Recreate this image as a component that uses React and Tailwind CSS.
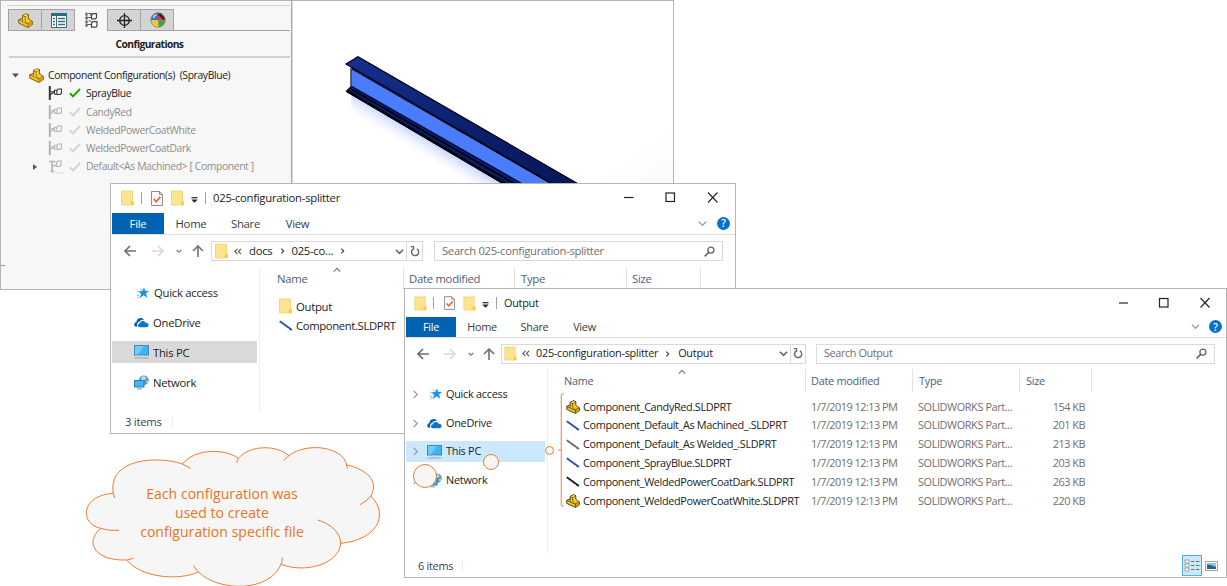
import React from 'react';

const files = [
  { icon: 'part', name: 'Component_CandyRed.SLDPRT', size: '154 KB' },
  { icon: '#2b46a8', name: 'Component_Default_As Machined_.SLDPRT', size: '201 KB' },
  { icon: '#666666', name: 'Component_Default_As Welded_.SLDPRT', size: '213 KB' },
  { icon: '#2b46a8', name: 'Component_SprayBlue.SLDPRT', size: '203 KB' },
  { icon: '#111111', name: 'Component_WeldedPowerCoatDark.SLDPRT', size: '263 KB' },
  { icon: 'part', name: 'Component_WeldedPowerCoatWhite.SLDPRT', size: '220 KB' },
];

function PartIcon({ className = 'h-[15px] w-[15px]', line = '#8a6a14' }) {
  return (
    <svg viewBox="0 0 16 16" className={className}>
      <path d="M.8 7.200 4.800 5.500V2.600L8.600.7l2.600 1.200v4.200l1.600 1.300L15.300 9v3.200L10.800 15.400.8 10.600Z" fill="#f9cb2e" stroke={line} strokeWidth="1.100" strokeLinejoin="round" />
      <path d="M5 2.800 7.600 4l3.400-2M7.600 4v3.200c.3 2 1.600 3.200 3.200 4.100v3.900M10.800 11.300 15.100 9M1 7.400l9.500 4.500M4.800 5.500v3.500" fill="none" stroke={line} strokeWidth=".9" />
      <path d="M5.800 2.600 8.500 1.300l1.900.9-2.800 1.200Z" fill="#ffe88a" />
      <path d="M11.400 11.700 14.800 9.700v2.200L11.400 14.400Z" fill="#d89b16" />
    </svg>
  );
}

function FolderIcon({ className = 'h-[16px] w-[13px]' }) {
  return (
    <svg viewBox="0 0 13 16" className={className}>
      <path d="M.5 1h11v9.500l1 .8V15H.5Z" fill="#ffe48f" stroke="#f0cf68" strokeWidth=".8" />
      <path d="M9.800 11.300h2.700V15H9.800Z" fill="#f6cb4f" />
    </svg>
  );
}

function CheckDoc({ className = 'h-[15px] w-[12px]' }) {
  return (
    <svg viewBox="0 0 12 15" className={className}>
      <path d="M.5.5h8l3 3v11H.5Z" fill="#f9f9f9" stroke="#8b8b8b" />
      <path d="M8.500.5v3h3" fill="none" stroke="#8b8b8b" />
      <path d="m2.800 8 2.400 2.700 4.200-4.900" fill="none" stroke="#e8622c" strokeWidth="1.700" />
    </svg>
  );
}

function QuickMenu() {
  return (
    <svg viewBox="0 0 7 6" className="h-[6px] w-[7px]">
      <path d="M.5.7h6" stroke="#222" strokeWidth="1.200" />
      <path d="M.3 2.600h6.400L3.500 5.800Z" fill="#222" />
    </svg>
  );
}

function Chevron({ d, className, color = '#777', sw = 1.4 }) {
  return (
    <svg viewBox="0 0 10 10" className={className}>
      <path d={d} fill="none" stroke={color} strokeWidth={sw} />
    </svg>
  );
}
const DOWN = 'M1 3l4 4 4-4';
const UP = 'M1 7l4-4 4 4';
const RIGHT = 'M3 1l4 4-4 4';

function Arrow({ d, color }) {
  return (
    <svg viewBox="0 0 12 12" className="h-[12px] w-[12px]">
      <path d={d} fill="none" stroke={color} strokeWidth="1.600" />
    </svg>
  );
}

function WindowButtons() {
  return (
    <svg viewBox="0 0 94 12" className="h-[12px] w-[94px]">
      <path d="M0 5.500h9.500" stroke="#222" strokeWidth="1.200" />
      <rect x="42" y="1" width="8.500" height="8.500" fill="none" stroke="#222" strokeWidth="1.200" />
      <path d="M84 .5l9.500 10M93.500.5 84 10.500" stroke="#222" strokeWidth="1.100" />
    </svg>
  );
}

function Help() {
  return (
    <span className="flex h-[13px] w-[13px] items-center justify-center rounded-full bg-[#0a6fce] text-[10px] font-semibold leading-none text-white">?</span>
  );
}

function Refresh() {
  return (
    <svg viewBox="0 0 10 11" className="h-[11px] w-[10px]">
      <path d="M6.900 2.900A3.600 3.600 0 1 1 3 3.100" fill="none" stroke="#666" strokeWidth="1.400" />
      <path d="M3.800.7H.9M3.600.3v3.500" fill="none" stroke="#666" strokeWidth="1.300" />
    </svg>
  );
}

function SearchIcon() {
  return (
    <svg viewBox="0 0 11 11" className="h-[11px] w-[11px]">
      <circle cx="6.900" cy="4.100" r="3" fill="none" stroke="#666" strokeWidth="1.400" />
      <path d="M4.700 6.300.7 10.300" stroke="#666" strokeWidth="1.700" />
    </svg>
  );
}

function StarIcon() {
  return (
    <svg viewBox="0 0 14 13" className="h-[12px] w-[14px]">
      <path d="m8.200.5 1.200 3.600 4.400.1-3.500 2.500 1.300 4.900-3.900-2.600-4.500 3.100 1.800-4.900L1.700 5l4.300-.6Z" fill="#1c93e6" />
      <path d="M.3 9.400 3 8.600M.5 4.200l2.400 1M.6 11.800l2.200-1.300M4 2l2 1" stroke="#6cbcf2" strokeWidth="1" />
    </svg>
  );
}
function CloudIcon() {
  return (
    <svg viewBox="0 0 15 11" className="h-[11px] w-[15px]">
      <path d="M.4 8.800C-.3 6.300 1.300 5 2.500 5 2.300 2.200 5 .5 7.400 1c1.400.2 2.200 1 2.700 1.900C7.500 2.500 6 3.600 5.400 5 3.500 5.300 2.800 7 3.300 9.600 2 10 .8 9.700.4 8.800Z" fill="#0a64b8" />
      <path d="M5.600 10.200C3.400 9.900 3.500 6.400 6 6.200 6.400 3.600 10.600 3 11.600 5.800c2.400-.2 3.300 1.600 2.900 3-.3.900-1 1.400-1.900 1.400Z" fill="#0a74d2" />
    </svg>
  );
}
function PcIcon() {
  return (
    <svg viewBox="0 0 15 14" className="h-[14px] w-[15px]">
      <rect x=".5" y=".5" width="14" height="9.500" fill="#3db4f5" stroke="#3f88b5" />
      <path d="M1 1h9L4 9.500H1Z" fill="#6fcbfa" />
      <path d="M5 10.500h5v1H5Z" fill="#c4ccd2" />
      <path d="M.5 13h14" stroke="#8fa3b3" strokeWidth="1" />
    </svg>
  );
}
function NetworkIcon() {
  return (
    <svg viewBox="0 0 15 15" className="h-[15px] w-[15px]">
      <circle cx="9.800" cy="5.300" r="4.900" fill="#5a9dbd" />
      <path d="M7 2.300c2-2 5-.5 5.500.8L10 5.500 7.500 4.800ZM12 6l2.500 0-1.500 3Z" fill="#b6dce8" />
      <rect x=".5" y="5.500" width="9.500" height="6.500" fill="#3fb5f5" stroke="#2b7fae" />
      <path d="M3 13.800h5" stroke="#8fa3b3" strokeWidth="1.200" />
    </svg>
  );
}

function BeamIcon({ color }) {
  return (
    <svg viewBox="0 0 14 12" className="h-[12px] w-[14px]">
      <path d="M.8 1.200l12 8.800" stroke={color} strokeWidth="2" />
      <path d="M1.500 2.600l9.500 7" stroke="#ffffff" opacity=".45" strokeWidth="1" strokeDasharray="1.500 1.500" />
    </svg>
  );
}

function FeatureIcon({ color, last }) {
  return last ? (
    <svg viewBox="0 0 16 16" className="h-[16px] w-[16px]">
      <path d="M1 2.500h6.500M4 2.500v10M2.500 12.500h4M4 6.500h4.500" fill="none" stroke={color} strokeWidth="1.600" />
      <path d="M8.500 3.500l1.500-1.500h3v4l-1.500 1.500h-3ZM8.500 14h1.200M11.300 14h1.200M14 14h1.200" fill="none" stroke={color} strokeWidth="1.200" />
    </svg>
  ) : (
    <svg viewBox="0 0 16 16" className="h-[16px] w-[16px]">
      <path d="M1.800 1v14" stroke={color} strokeWidth="2" />
      <path d="M2 10.200 6.500 6.500M3 6.800h3.500" stroke={color} strokeWidth="1.100" />
      <path d="M6.500 5.300h2.400v4H6.500ZM8.900 5.300l1.200-1.300h3.300v4.200l-1.300 1.300h-3.200" fill="none" stroke={color} strokeWidth="1.100" />
    </svg>
  );
}

function Tick({ color }) {
  return (
    <svg viewBox="0 0 12 10" className="h-[10px] w-[12px]">
      <path d="M.9 5.300 4 8.400 11 1" fill="none" stroke={color} strokeWidth="2" />
    </svg>
  );
}

const TAB = 'flex w-[33px] items-center justify-center border-r border-[#a3a3a3] pl-px';

function ConfigRow({ label, active, last }) {
  return (
    <div className={`flex h-[18.3px] items-center ${active ? 'text-[#1a1a1a]' : 'text-[#8d8d8d]'}`}>
      <span className="flex w-[47px] justify-end pr-[11px]">
        {last && <svg viewBox="0 0 4 6" className="h-[6px] w-[4px]"><path d="M0 0l4 3-4 3Z" fill="#555" /></svg>}
      </span>
      <FeatureIcon color={active ? '#333' : '#b4b4b4'} last={last} />
      <span className="ml-[5px] mr-[5px] flex"><Tick color={active ? '#27a300' : '#d3d3d3'} /></span>
      <span>{label}</span>
    </div>
  );
}

function ModelWindow() {
  return (
    <div className="absolute left-0 top-0 flex h-[290px] w-[674px] border border-[#b5b5b5] bg-white">
      <div className="relative flex w-[290px] flex-col bg-[#f7f7f7] text-[10.3px] leading-none tracking-[-0.35px]">
        <div className="ml-[6px] mr-px mt-[4px] border-t border-[#d0d0d0]" />
        <div className="ml-[7px] mr-px mt-[3px] flex h-[22px] border-b border-[#a3a3a3]">
          <div className="flex w-[34px] items-center justify-center border border-b-0 border-[#a3a3a3] bg-[#d4d4d4]"><PartIcon /></div>
          <div className={`${TAB} border-t bg-[#d4d4d4]`}>
            <svg viewBox="0 0 16 15" className="h-[15px] w-[16px]">
              <rect x=".5" y=".5" width="15" height="14" fill="#fff" stroke="#3f687e" />
              <path d="M0 1.500h16" stroke="#2d6a88" strokeWidth="3" />
              <path d="M5.500 3v11" stroke="#3f687e" />
              <path d="M2 5.500h2M2 8.500h2M2 11.500h2M7 5.500h7M7 8.500h7M7 11.500h7" stroke="#3c6b82" strokeWidth="1.300" />
            </svg>
          </div>
          <div className={`${TAB} -mb-px bg-[#f7f7f7]`}>
            <svg viewBox="0 0 13 16" className="h-[16px] w-[13px]">
              <path d="M1.500.8v14" stroke="#555" strokeWidth="2" strokeDasharray="3 .8" />
              <path d="M2 5.500h4.500M2 12.500h4.500M3.500 1.500h2.500v2.500M3.500 9h3" fill="none" stroke="#555" strokeWidth="1.200" />
              <path d="M6.500 3l1.500-1.300h3.500v3.800l-1 1.300H6.500ZM6.500 11l1.500-1.300h4v4.200l-1 1.300H6.500Z" fill="#fff" stroke="#444" strokeWidth="1.200" />
            </svg>
          </div>
          <div className={`${TAB} border-t bg-[#d4d4d4]`}>
            <svg viewBox="0 0 15 15" className="h-[15px] w-[15px]">
              <circle cx="7.500" cy="7.500" r="4.800" fill="none" stroke="#222" strokeWidth="1.300" />
              <path d="M7.500 0v15M0 7.500h15" stroke="#222" strokeWidth="1.300" />
            </svg>
          </div>
          <div className={`${TAB} border-t bg-[#d4d4d4]`}>
            <svg viewBox="0 0 16 16" className="h-[16px] w-[16px]">
              <path d="M8 8.500V.8A7.300 7.300 0 0 0 .7 8Z" fill="#2f74cf" />
              <path d="M.7 8 8 8.500 9.500 15.200A7.300 7.300 0 0 1 .7 8Z" fill="#f5c92c" />
              <path d="M8 8.500 15.300 8A7.300 7.300 0 0 1 8.800 15.200Z" fill="#3ba648" />
              <path d="M8 8.500V.8A7.300 7.300 0 0 1 15.300 8Z" fill="#dd3f33" />
              <path d="M7.500 2l3-.8 4.600 5.300-1.600 1.500Z" fill="#2a2422" />
              <circle cx="8" cy="8" r="7.300" fill="none" stroke="#777" strokeWidth=".7" />
              <path d="M3.500 6a4 4 0 0 1 3-3.200" stroke="#fff" strokeWidth="1.600" fill="none" opacity=".7" />
            </svg>
          </div>
        </div>
        <div className="ml-[8px] mr-px flex h-[27px] items-center justify-center border-b-2 border-[#d0d0d0] pt-[2px] font-bold tracking-[-0.6px] text-[#1f1f1f]">Configurations</div>
        <div className="mt-[8px] flex h-[18.3px] items-center text-[#1a1a1a]">
          <svg viewBox="0 0 7 5" className="ml-[11px] mr-[10px] h-[5px] w-[7px]"><path d="M0 .5h7L3.500 4.500Z" fill="#555" /></svg>
          <PartIcon />
          <span className="ml-[4px] whitespace-pre">Component Configuration(s)  (SprayBlue)</span>
        </div>
        <ConfigRow label="SprayBlue" active />
        <ConfigRow label="CandyRed" />
        <ConfigRow label="WeldedPowerCoatWhite" />
        <ConfigRow label="WeldedPowerCoatDark" />
        <ConfigRow label="Default<As Machined> [ Component ]" last />
        <div className="mt-auto mb-[23px] w-[4px] border-t border-[#999]" />
      </div>
      <div className="w-[2px] border-l border-[#a8a8a8] bg-[#d8d8d8]" />
      <div className="flex-1 bg-gradient-to-br from-white from-70% to-[#eef1f4]">
        <svg viewBox="9 3 1140 549" className="h-[183px] w-[380px]">
          <defs>
            <linearGradient id="refl" gradientUnits="userSpaceOnUse" x1="320" y1="365" x2="290" y2="415">
              <stop offset="0" stopColor="#cddaff" />
              <stop offset="1" stopColor="#fff" stopOpacity="0" />
            </linearGradient>
            <linearGradient id="flange" x1="0" y1="0" x2="1" y2="1">
              <stop offset="0" stopColor="#17308f" />
              <stop offset=".6" stopColor="#0b1e6a" />
              <stop offset="1" stopColor="#08175a" />
            </linearGradient>
          </defs>
          <path d="M184 280V338L550 552H650Z" fill="url(#refl)" />
          <path d="M184 200 800 555H693L184 262Z" fill="#4a7cff" />
          <path d="M184 258 168 274 645 555H704Z" fill="#0a1c68" stroke="#000014" strokeWidth="3" />
          <path d="M180 265 680 555" stroke="#000" strokeWidth="4" />
          <path d="M172 274 648 553" stroke="#000" strokeWidth="7" />
          <path d="M168 192 204 170 872 556H793Z" fill="url(#flange)" stroke="#000014" strokeWidth="3.500" />
          <path d="M186 206 790 553" stroke="#05070f" strokeWidth="6" strokeDasharray="5 1" />
          <path d="M183 203V258" stroke="#222" strokeWidth="4" />
        </svg>
      </div>
    </div>
  );
}

function Sep({ className }) {
  return <span className={`h-[12px] w-px bg-[#a0a0a0] ${className}`} />;
}

function SourceWindow() {
  const nav = 'flex h-[29.8px] items-center';
  return (
    <div className="absolute left-[110px] top-[183px] flex h-[251px] w-[626px] flex-col border border-[#b5b5b5] bg-white text-[11.3px] leading-none tracking-[-0.27px] text-[#1c1c1c]">
      <div className="flex h-[29px] shrink-0 items-center pb-px pl-[10px] pr-[17px]">
        <FolderIcon />
        <Sep className="ml-[7px]" />
        <span className="ml-[9px]"><CheckDoc /></span>
        <span className="ml-[8px]"><FolderIcon /></span>
        <span className="ml-[7px] mt-[4px]"><QuickMenu /></span>
        <Sep className="ml-[7px]" />
        <span className="ml-[7px]">025-configuration-splitter</span>
        <span className="ml-auto"><WindowButtons /></span>
      </div>
      <div className="flex h-[22px] shrink-0 items-stretch border-b border-[#e0e0e0] pl-px pr-[5px] text-[#3a3a3a]">
        <span className="flex w-[52px] items-center justify-center bg-[#0063b1] text-white">File</span>
        <span className="flex w-[54px] items-center justify-center">Home</span>
        <span className="flex w-[55px] items-center justify-center">Share</span>
        <span className="flex w-[49px] items-center justify-center">View</span>
        <span className="ml-auto flex items-center gap-[10px] pb-px">
          <Chevron d={DOWN} className="h-[9px] w-[9px]" color="#a0a0a0" />
          <Help />
        </span>
      </div>
      <div className="flex h-[33px] shrink-0 items-center pb-px pl-[13px] pr-[12px]">
        <Arrow d="M6 1 1 6l5 5M1 6h11" color="#707070" />
        <span className="ml-[16px]"><Arrow d="M6 1l5 5-5 5M11 6H0" color="#d8d8d8" /></span>
        <Chevron d={DOWN} className="ml-[12px] h-[6px] w-[6px]" sw={2} />
        <span className="ml-[10px]"><Arrow d="M1 6l5-5 5 5M6 1v11" color="#707070" /></span>
        <div className="ml-[7px] flex h-[20px] w-[212px] items-center border border-[#dadada] pl-[3px]">
          <FolderIcon />
          <Chevron d="M5 2 2 5l3 3M9 2 6 5l3 3" className="ml-[5px] h-[9px] w-[9px]" color="#555" sw={1.2} />
          <span className="ml-[7px]">docs</span>
          <Chevron d={RIGHT} className="ml-[7px] mr-[5px] h-[6px] w-[7px]" color="#444" sw={2} />
          <span>025-co...</span>
          <Chevron d={RIGHT} className="ml-[6px] h-[6px] w-[7px]" color="#444" sw={2} />
          <Chevron d={DOWN} className="ml-auto mr-[2px] h-[9px] w-[9px]" color="#666" sw={1.8} />
          <span className="flex h-full w-[16px] items-center justify-center border-l border-[#dadada]"><Refresh /></span>
        </div>
        <div className="ml-[11px] flex h-[20px] flex-1 items-center justify-between border border-[#dadada] pl-[7px] pr-[7px] tracking-[-0.33px] text-[#6f6f6f]">
          <span>Search 025-configuration-splitter</span>
          <SearchIcon />
        </div>
      </div>
      <div className="flex min-h-0 flex-1">
        <div className="flex w-[149px] flex-col border-r border-[#efefef] pt-[10px]">
          <div className={nav}><span className="ml-[25px] mr-[4px]"><StarIcon /></span>Quick access</div>
          <div className={nav}><span className="ml-[23px] mr-[4px]"><CloudIcon /></span>OneDrive</div>
          <div className={nav}><div className="ml-px flex h-[22px] w-[145px] items-center bg-[#d9d9d9]"><span className="ml-[22px] mr-[4px]"><PcIcon /></span>This PC</div></div>
          <div className={nav}><span className="ml-[23px] mr-[4px]"><NetworkIcon /></span>Network</div>
        </div>
        <div className="relative flex flex-1 flex-col">
          <Chevron d={UP} className="absolute left-[73px] top-[-2px] h-[8px] w-[8px]" />
          <div className="flex h-[22px] items-center text-[#4c607a]">
            <span className="w-[143px] pl-[17px]">Name</span>
            <span className="flex h-full w-[111px] items-center border-l border-[#e2e2e2] pl-[5px]">Date modified</span>
            <span className="flex h-full w-[112px] items-center border-l border-[#e2e2e2] pl-[6px]">Type</span>
            <span className="flex h-full w-[75px] items-center border-x border-[#e2e2e2] pl-[5px]">Size</span>
          </div>
          <div className="mt-[6.6px] flex h-[19.3px] items-center pl-[19px]"><FolderIcon /><span className="ml-[4px]">Output</span></div>
          <div className="flex h-[19.3px] items-center pl-[19px] tracking-[-0.37px]"><BeamIcon color="#2b46a8" /><span className="ml-[3px]">Component.SLDPRT</span></div>
        </div>
      </div>
      <div className="flex h-[22px] items-center pl-[14px] text-[#31425c]">3 items<span className="ml-[10px] h-[12px] w-px bg-[#eee]" /></div>
    </div>
  );
}

function OutputWindow() {
  const nav = 'flex h-[28.6px] items-center';
  const arrow = <Chevron d={RIGHT} className="h-[9px] w-[9px]" color="#999" />;
  const sm = 'h-[15px] w-[13px]';
  return (
    <div className="absolute left-[404px] top-[288px] flex h-[290px] w-[823px] flex-col border border-[#b5b5b5] bg-white text-[10.9px] leading-none tracking-[-0.27px] text-[#1c1c1c]">
      <div className="flex h-[28px] shrink-0 items-center pl-[9px] pr-[15px]">
        <FolderIcon className={sm} />
        <Sep className="ml-[6px]" />
        <span className="ml-[10px]"><CheckDoc className="h-[14px] w-[11px]" /></span>
        <span className="ml-[8px]"><FolderIcon className={sm} /></span>
        <span className="ml-[6px] mt-[3px]"><QuickMenu /></span>
        <Sep className="ml-[7px]" />
        <span className="ml-[7px]">Output</span>
        <span className="ml-auto"><svg viewBox="0 0 92 12" className="h-[12px] w-[92px]">
          <path d="M0 6h9" stroke="#222" strokeWidth="1.200" />
          <rect x="40.500" y="1.500" width="8.500" height="8.500" fill="none" stroke="#222" strokeWidth="1.200" />
          <path d="M81.500 1l9 9.500M90.500 1l-9 9.500" stroke="#222" strokeWidth="1.100" />
        </svg></span>
      </div>
      <div className="flex h-[21px] shrink-0 items-stretch border-b border-[#e0e0e0] pl-px pr-[4px] text-[#3a3a3a]">
        <span className="flex w-[50px] items-center justify-center bg-[#0063b1] text-white">File</span>
        <span className="flex w-[52px] items-center justify-center">Home</span>
        <span className="flex w-[53px] items-center justify-center">Share</span>
        <span className="flex w-[47px] items-center justify-center">View</span>
        <span className="ml-auto flex items-center gap-[9px] pb-px">
          <Chevron d={DOWN} className="h-[9px] w-[9px]" color="#a0a0a0" />
          <Help />
        </span>
      </div>
      <div className="flex h-[31px] shrink-0 items-center pl-[12px] pr-[11px]">
        <Arrow d="M6 1 1 6l5 5M1 6h11" color="#707070" />
        <span className="ml-[15px]"><Arrow d="M6 1l5 5-5 5M11 6H0" color="#d8d8d8" /></span>
        <Chevron d={DOWN} className="ml-[12px] h-[6px] w-[6px]" sw={2} />
        <span className="ml-[9px]"><Arrow d="M1 6l5-5 5 5M6 1v11" color="#707070" /></span>
        <div className="ml-[6px] flex h-[20px] w-[305px] items-center border border-[#dadada] pl-[2px]">
          <FolderIcon className={sm} />
          <Chevron d="M5 2 2 5l3 3M9 2 6 5l3 3" className="ml-[4px] h-[9px] w-[9px]" color="#555" sw={1.2} />
          <span className="ml-[6px]">025-configuration-splitter</span>
          <Chevron d={RIGHT} className="ml-[6px] mr-[7px] h-[6px] w-[7px]" color="#444" sw={2} />
          <span>Output</span>
          <Chevron d={DOWN} className="ml-auto mr-[2px] h-[9px] w-[9px]" color="#666" sw={1.8} />
          <span className="flex h-full w-[15px] items-center justify-center border-l border-[#dadada]"><Refresh /></span>
        </div>
        <div className="ml-[10px] flex h-[20px] flex-1 items-center justify-between border border-[#dadada] pl-[7px] pr-[7px] tracking-[-0.4px] text-[#6f6f6f]">
          <span>Search Output</span>
          <SearchIcon />
        </div>
      </div>
      <div className="flex min-h-0 flex-1">
        <div className="flex w-[143px] flex-col border-r border-[#efefef] pt-[11.2px]">
          <div className={nav}><span className="ml-[6px] mr-[9px]">{arrow}</span><StarIcon /><span className="ml-[3px]">Quick access</span></div>
          <div className={nav}><span className="ml-[6px] mr-[7px]">{arrow}</span><CloudIcon /><span className="ml-[4px]">OneDrive</span></div>
          <div className={nav}><div className="ml-px flex h-[21px] w-[139px] items-center bg-[#cce8ff]"><span className="ml-[5px] mr-[7px]">{arrow}</span><PcIcon /><span className="ml-[4px]">This PC</span></div></div>
          <div className={nav}><span className="ml-[6px] mr-[7px]">{arrow}</span><NetworkIcon /><span className="ml-[4px]">Network</span></div>
        </div>
        <div className="relative flex flex-1 flex-col">
          <Chevron d={UP} className="absolute left-[130px] top-[-1px] h-[8px] w-[8px]" />
          <div className="flex h-[23px] items-center text-[#4c607a]">
            <span className="w-[257px] pl-[16px] pt-px">Name</span>
            <span className="flex h-full w-[107px] items-center border-l border-[#e2e2e2] pl-[5px] pt-px">Date modified</span>
            <span className="flex h-full w-[107px] items-center border-l border-[#e2e2e2] pl-[6px] pt-px">Type</span>
            <span className="flex h-full w-[73px] items-center border-x border-[#e2e2e2] pl-[6px] pt-px">Size</span>
          </div>
          <div className="mt-[5.6px] flex flex-col text-[#6f6f6f]">
            {files.map((f) => (
              <div key={f.name} className="flex h-[18.8px] items-center pl-[18px]">
                <span className="w-[17px]">{f.icon === 'part' ? <PartIcon className="h-[14px] w-[14px]" line="#4d3c0d" /> : <BeamIcon color={f.icon} />}</span>
                <span className="w-[228px] whitespace-nowrap tracking-[-0.37px] text-[#1c1c1c]">{f.name}</span>
                <span className="w-[107px] whitespace-nowrap tracking-[-0.52px]">1/7/2019 12:13 PM</span>
                <span className="w-[107px] whitespace-nowrap tracking-[-0.4px]">SOLIDWORKS Part...</span>
                <span className="w-[60px] text-right tracking-[-0.5px]">{f.size}</span>
              </div>
            ))}
          </div>
        </div>
      </div>
      <div className="flex h-[23px] shrink-0 items-center pl-[13px] pr-[8px] text-[#31425c]">
        <span className="pt-[2px]">6 items</span><span className="ml-[9px] h-[11px] w-px bg-[#eee]" />
        <span className="ml-auto flex h-[21px] w-[20px] items-center justify-center border border-[#4fb2e3] bg-[#cbe8f6]">
          <svg viewBox="0 0 16 13" className="h-[13px] w-[16px]">
            <path d="M1 1h4v3H1ZM1 5h4v3H1ZM1 9h4v3H1Z" fill="#fff" stroke="#a09c9c" />
            <path d="M7 2.500h3.500M12 2.500h3.500M7 6.500h3.500M12 6.500h3.500M7 10.500h3.500M12 10.500h3.500" stroke="#66757e" />
          </svg>
        </span>
        <svg viewBox="0 0 13 10" className="ml-[3px] h-[10px] w-[13px]">
          <rect x=".5" y=".5" width="12" height="9" fill="#fff" stroke="#a5a5a5" />
          <path d="M2 2h9v3H2Z" fill="#8fc3f5" />
          <path d="M2 3.500c3 0 5 1.500 9 2V8H2Z" fill="#2b6280" />
        </svg>
      </div>
    </div>
  );
}

function Callout() {
  return (
    <>
      <svg viewBox="0 0 960 438" className="absolute left-[80px] top-[440px] h-[146px] w-[320px]">
        <path d="M100 160C88 92 150 58 235 60 262 60 288 65 307 72 345 25 435 25 475 55 510 14 590 14 627 47 680 5 790 20 800 75 858 86 900 125 872 168 930 225 890 300 782 310 778 370 680 402 603 373 570 455 420 458 355 396 290 425 180 410 140 360 50 364 10 310 62 265-5 250 5 165 100 160Z" fill="#f6f6f6" stroke="#ed7d31" strokeWidth="3" />
        <path d="M307 72Q322 79 332 86M475 55 470 68M627 47Q618 53 611 62M800 75 802 86M872 168Q860 185 840 194M782 310C782 280 755 252 713 240M603 373Q607 365 607 352M355 396Q347 388 341 377M140 360Q152 358 161 354M62 265Q85 273 117 271M100 160 104 174" fill="none" stroke="#ed7d31" strokeWidth="3" />
      </svg>
      <div className="absolute left-[122px] top-[483.500px] w-[200px] whitespace-nowrap text-center text-[14px] leading-[19px] tracking-[0.05px] text-[#e8731f]">
        Each configuration was<br />used to create<br />configuration specific file
      </div>
      <span className="absolute left-[413px] top-[464px] h-[24px] w-[24px] rounded-full border border-[#ed7d31] bg-[#f6f6f6]" />
      <span className="absolute left-[483px] top-[454px] h-[16px] w-[16px] rounded-full border border-[#ed7d31] bg-[#f6f6f6]" />
      <span className="absolute left-[545px] top-[446px] h-[9px] w-[9px] rounded-full border border-[#ed7d31] bg-[#f6f6f6]" />
      <svg viewBox="0 0 6 114" className="absolute left-[558px] top-[393px] h-[114px] w-[6px]">
        <path d="M5.500 1H4.500Q3.300 1 3.300 3V111Q3.300 113 4.500 113H5.500M3 57H.5" fill="none" stroke="#f0a070" strokeWidth="1.300" />
      </svg>
    </>
  );
}

export default function App() {
  return (
    <div className="relative h-[586px] w-[1227px] overflow-hidden bg-white font-['Open_Sans','Noto_Sans',sans-serif]">
      <ModelWindow />
      <SourceWindow />
      <OutputWindow />
      <Callout />
    </div>
  );
}
